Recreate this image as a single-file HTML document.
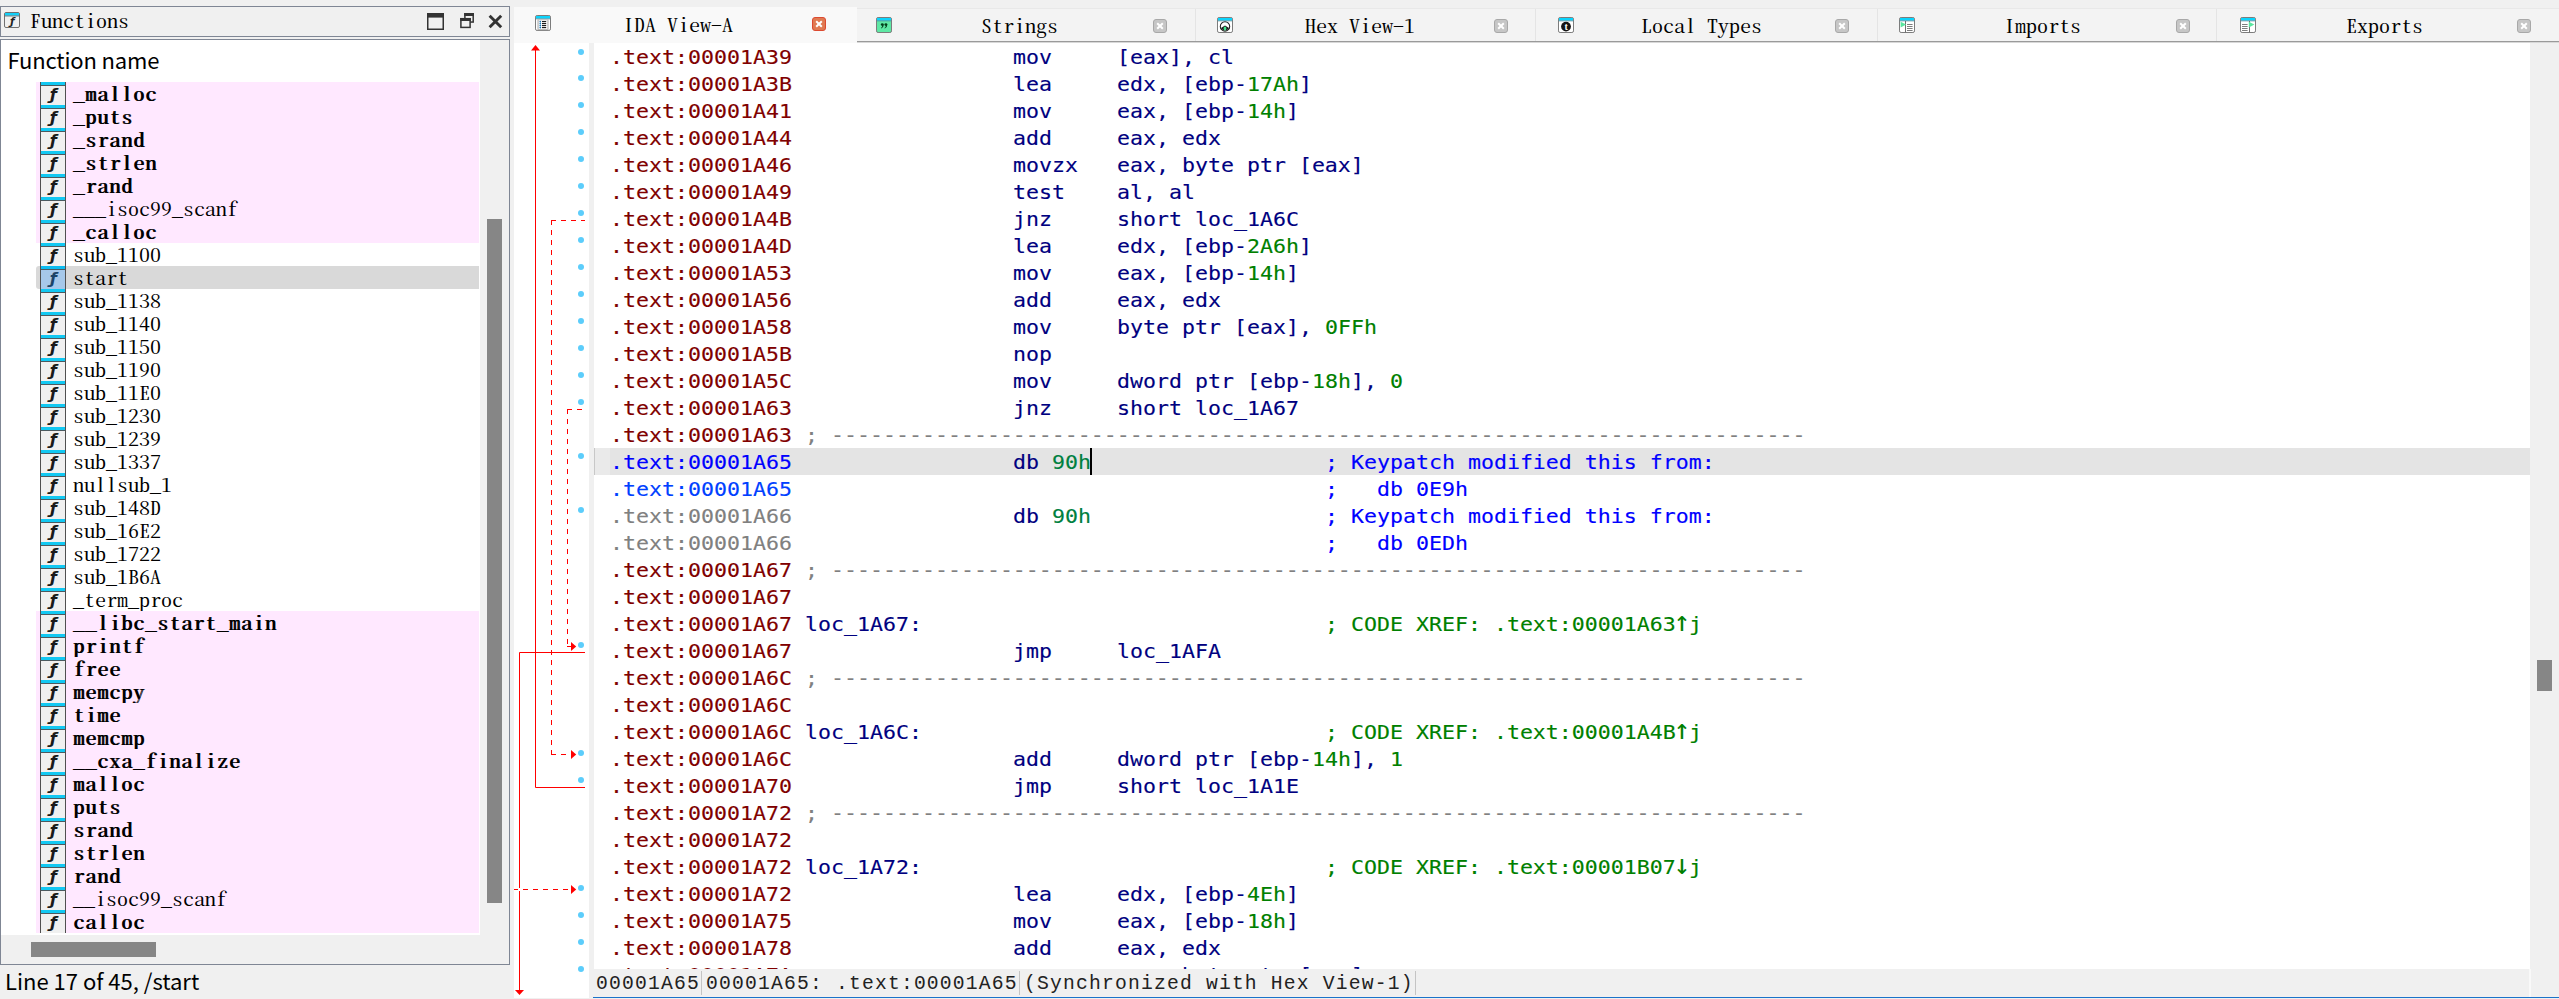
<!DOCTYPE html>
<html lang="en"><head><meta charset="utf-8"><title>IDA</title>
<style>
html,body{margin:0;padding:0}
body{width:2559px;height:999px;overflow:hidden;background:#f0f0f0;position:relative;font-family:"Liberation Sans","Noto Sans CJK SC",sans-serif}
.abs{position:absolute}
.box{position:absolute;box-sizing:border-box;border:1px solid #7f8694}
.ui{font-family:"Noto Sans CJK SC","Liberation Sans",sans-serif;font-size:22px;color:#000;white-space:pre;line-height:30px}
.sim{font-family:"Noto Serif CJK SC","Liberation Mono",monospace;font-feature-settings:"hwid";white-space:pre;color:#000;transform:scaleX(1.2022);transform-origin:0 0}
.fn{position:absolute;left:36px;width:443px;height:23px}
.fn.p{background:#ffe8ff}
.fn.s{background:#d9d9d9;border-radius:3px 0 0 3px}
.fn.s .ic i{color:#1c4468}
.fn.s .ic:before{background:#0cbcf0}
.fn .ic{position:absolute;left:4px;top:0;width:26px;height:23px;box-sizing:border-box;border-left:1px solid #505050;border-right:1px solid #505050;background:#f0f0f0}
.fn .ic:before{content:"";position:absolute;left:0;right:0;top:0;height:3px;background:#12c8f2}
.fn .ic:after{content:"";position:absolute;left:0;right:0;top:3px;height:1px;background:#4c5a60}
.fn.s .ic{background:#a6c8ea}
.fn .ic i{position:absolute;left:0.4px;width:24px;top:2.63px;text-align:center;font:italic bold 16.4px/20px "DejaVu Sans",sans-serif;color:#1a1a1a}
.fn .t{position:absolute;left:37px;top:-0.21px;font:18.3px/23px "Noto Serif CJK SC","Liberation Mono",monospace;font-feature-settings:"hwid";white-space:pre;color:#000;transform:scaleX(1.2022);transform-origin:0 0}
.fn .t.b{letter-spacing:0.83px;text-shadow:0.83px 0 0 #000}
.ln{position:absolute;left:0;height:27px;width:1936px}
.ln span{position:absolute;top:0.51px;font:20.2px/27px 'DejaVu Sans Mono','Liberation Mono',monospace;white-space:pre;transform:scaleX(1.06895);transform-origin:0 0;-webkit-text-stroke:0.14px currentColor}
.ln span.ar{font-size:28px;top:-1.89px;margin-left:-1.95px;transform:none;-webkit-text-stroke:0}
.a{color:#800000}.b1{color:#0000ff}.b2{color:#0040ff}.gr{color:#808080}
.n{color:#000080}.g{color:#008000}.t{color:#008040}.d{color:#808080}.b{color:#0000ff}
.dot{position:absolute;left:578px;width:6px;height:6px;border-radius:50%;background:#5ccdfb}
.sb span{position:absolute;top:1.75px;font:19.7px/27px "Liberation Mono",monospace;letter-spacing:1.178px;white-space:pre;color:#222}
.sb i{position:absolute;top:2px;width:1px;height:24px;background:#c4c4c4}
</style></head><body>
<div class="box" style="left:0;top:6px;width:510px;height:31px;background:#f0f0f0"></div>
<svg class="abs" style="left:4px;top:12px" width="16" height="16" viewBox="0 0 16 16"><rect x="0.5" y="0.5" width="15" height="15" rx="1.5" fill="#f0f0f0" stroke="#707070"/><rect x="1" y="1" width="14" height="2.6" fill="#12d0f8"/><rect x="0.5" y="3.5" width="15" height="0.9" fill="#4c6a74"/><text x="8.4" y="12.8" text-anchor="middle" font-family="DejaVu Sans,sans-serif" font-style="italic" font-weight="bold" font-size="10.5" fill="#222">ƒ</text></svg>
<div class="abs sim" style="left:29.5px;top:9.09px;font-size:18.3px;line-height:22px">Functions</div>
<svg class="abs" style="left:424px;top:10px" width="84" height="24" viewBox="0 0 84 24"><rect x="3.75" y="3.75" width="15.5" height="15.5" fill="none" stroke="#333" stroke-width="1.5"/><rect x="3" y="3" width="17" height="4.6" fill="#333"/><rect x="40.9" y="3.75" width="8.3" height="8.3" fill="none" stroke="#333" stroke-width="1.5"/><rect x="40.2" y="3" width="9.8" height="3" fill="#333"/><rect x="36.9" y="8.7" width="9.2" height="8.7" fill="#f0f0f0" stroke="#333" stroke-width="1.5"/><rect x="36.2" y="8" width="10.6" height="3" fill="#333"/><path d="M65.6 5.7 L77.2 17.3 M77.2 5.7 L65.6 17.3" stroke="#333" stroke-width="2.9" fill="none"/></svg>
<div class="box" style="left:0;top:39px;width:510px;height:926px;background:#fff"></div>
<div class="abs ui" style="left:7.4px;top:44.31px;letter-spacing:-0.15px">Function name</div>
<div class="fn p" style="top:82px"><span class="ic"><i>ƒ</i></span><span class="t b">_malloc</span></div>
<div class="fn p" style="top:105px"><span class="ic"><i>ƒ</i></span><span class="t b">_puts</span></div>
<div class="fn p" style="top:128px"><span class="ic"><i>ƒ</i></span><span class="t b">_srand</span></div>
<div class="fn p" style="top:151px"><span class="ic"><i>ƒ</i></span><span class="t b">_strlen</span></div>
<div class="fn p" style="top:174px"><span class="ic"><i>ƒ</i></span><span class="t b">_rand</span></div>
<div class="fn p" style="top:197px"><span class="ic"><i>ƒ</i></span><span class="t">___isoc99_scanf</span></div>
<div class="fn p" style="top:220px"><span class="ic"><i>ƒ</i></span><span class="t b">_calloc</span></div>
<div class="fn" style="top:243px"><span class="ic"><i>ƒ</i></span><span class="t">sub_1100</span></div>
<div class="fn s" style="top:266px"><span class="ic"><i>ƒ</i></span><span class="t">start</span></div>
<div class="fn" style="top:289px"><span class="ic"><i>ƒ</i></span><span class="t">sub_1138</span></div>
<div class="fn" style="top:312px"><span class="ic"><i>ƒ</i></span><span class="t">sub_1140</span></div>
<div class="fn" style="top:335px"><span class="ic"><i>ƒ</i></span><span class="t">sub_1150</span></div>
<div class="fn" style="top:358px"><span class="ic"><i>ƒ</i></span><span class="t">sub_1190</span></div>
<div class="fn" style="top:381px"><span class="ic"><i>ƒ</i></span><span class="t">sub_11E0</span></div>
<div class="fn" style="top:404px"><span class="ic"><i>ƒ</i></span><span class="t">sub_1230</span></div>
<div class="fn" style="top:427px"><span class="ic"><i>ƒ</i></span><span class="t">sub_1239</span></div>
<div class="fn" style="top:450px"><span class="ic"><i>ƒ</i></span><span class="t">sub_1337</span></div>
<div class="fn" style="top:473px"><span class="ic"><i>ƒ</i></span><span class="t">nullsub_1</span></div>
<div class="fn" style="top:496px"><span class="ic"><i>ƒ</i></span><span class="t">sub_148D</span></div>
<div class="fn" style="top:519px"><span class="ic"><i>ƒ</i></span><span class="t">sub_16E2</span></div>
<div class="fn" style="top:542px"><span class="ic"><i>ƒ</i></span><span class="t">sub_1722</span></div>
<div class="fn" style="top:565px"><span class="ic"><i>ƒ</i></span><span class="t">sub_1B6A</span></div>
<div class="fn" style="top:588px"><span class="ic"><i>ƒ</i></span><span class="t">_term_proc</span></div>
<div class="fn p" style="top:611px"><span class="ic"><i>ƒ</i></span><span class="t b">__libc_start_main</span></div>
<div class="fn p" style="top:634px"><span class="ic"><i>ƒ</i></span><span class="t b">printf</span></div>
<div class="fn p" style="top:657px"><span class="ic"><i>ƒ</i></span><span class="t b">free</span></div>
<div class="fn p" style="top:680px"><span class="ic"><i>ƒ</i></span><span class="t b">memcpy</span></div>
<div class="fn p" style="top:703px"><span class="ic"><i>ƒ</i></span><span class="t b">time</span></div>
<div class="fn p" style="top:726px"><span class="ic"><i>ƒ</i></span><span class="t b">memcmp</span></div>
<div class="fn p" style="top:749px"><span class="ic"><i>ƒ</i></span><span class="t b">__cxa_finalize</span></div>
<div class="fn p" style="top:772px"><span class="ic"><i>ƒ</i></span><span class="t b">malloc</span></div>
<div class="fn p" style="top:795px"><span class="ic"><i>ƒ</i></span><span class="t b">puts</span></div>
<div class="fn p" style="top:818px"><span class="ic"><i>ƒ</i></span><span class="t b">srand</span></div>
<div class="fn p" style="top:841px"><span class="ic"><i>ƒ</i></span><span class="t b">strlen</span></div>
<div class="fn p" style="top:864px"><span class="ic"><i>ƒ</i></span><span class="t b">rand</span></div>
<div class="fn p" style="top:887px"><span class="ic"><i>ƒ</i></span><span class="t">__isoc99_scanf</span></div>
<div class="fn p" style="top:910px"><span class="ic"><i>ƒ</i></span><span class="t b">calloc</span></div>
<div class="abs" style="left:480px;top:40px;width:29px;height:895px;background:#f0f0f0"></div>
<div class="abs" style="left:487px;top:219px;width:15px;height:684px;background:#868686"></div>
<div class="abs" style="left:1px;top:935px;width:508px;height:29px;background:#f0f0f0"></div>
<div class="abs" style="left:31px;top:942px;width:125px;height:15px;background:#868686"></div>
<div class="abs ui" style="left:5px;top:965.11px">Line 17 of 45, /start</div>
<div class="abs" style="left:514px;top:8px;width:2045px;height:1px;background:#e8e8e8"></div>
<div class="abs" style="left:514px;top:9px;width:2045px;height:32px;background:#f3f3f3"></div>
<div class="abs" style="left:514px;top:41px;width:2045px;height:1px;background:#9a9a9a"></div>
<div class="abs" style="left:514px;top:42px;width:2045px;height:1px;background:#d8d8d8"></div>
<div class="abs" style="left:514px;top:7px;width:342.5px;height:35.5px;background:#f9f9f9"></div>
<div class="abs sim" style="left:623px;top:13.09px;font-size:18.3px;line-height:22px">IDA View-A</div>
<div class="abs" style="left:1195.0px;top:9px;width:1px;height:32px;background:#e4e4e4"></div>
<div class="abs sim" style="left:981px;top:14.09px;font-size:18.3px;line-height:22px">Strings</div>
<div class="abs" style="left:1535.25px;top:9px;width:1px;height:32px;background:#e4e4e4"></div>
<div class="abs sim" style="left:1305px;top:14.09px;font-size:18.3px;line-height:22px">Hex View-1</div>
<div class="abs" style="left:1876.9px;top:9px;width:1px;height:32px;background:#e4e4e4"></div>
<div class="abs sim" style="left:1641px;top:14.09px;font-size:18.3px;line-height:22px">Local Types</div>
<div class="abs" style="left:2216.3px;top:9px;width:1px;height:32px;background:#e4e4e4"></div>
<div class="abs sim" style="left:2004px;top:14.09px;font-size:18.3px;line-height:22px">Imports</div>
<div class="abs" style="left:2560px;top:9px;width:1px;height:32px;background:#e4e4e4"></div>
<div class="abs sim" style="left:2346px;top:14.09px;font-size:18.3px;line-height:22px">Exports</div>
<svg class="abs" style="left:811.8px;top:17px" width="14" height="14" viewBox="0 0 14 14"><rect x="0.5" y="0.5" width="13" height="13" rx="2.5" fill="#e07a52" stroke="#dc4a30"/><path d="M4.2 4.2 L9.8 9.8 M9.8 4.2 L4.2 9.8" stroke="#fff" stroke-width="2" fill="none"/></svg>
<svg class="abs" style="left:1153.3px;top:19.3px" width="14" height="14" viewBox="0 0 14 14"><rect x="0.5" y="0.5" width="13" height="13" rx="2.5" fill="#c6c6c6" stroke="#a8a8a8"/><path d="M4.2 4.2 L9.8 9.8 M9.8 4.2 L4.2 9.8" stroke="#fff" stroke-width="2" fill="none"/></svg>
<svg class="abs" style="left:1494px;top:19.3px" width="14" height="14" viewBox="0 0 14 14"><rect x="0.5" y="0.5" width="13" height="13" rx="2.5" fill="#c6c6c6" stroke="#a8a8a8"/><path d="M4.2 4.2 L9.8 9.8 M9.8 4.2 L4.2 9.8" stroke="#fff" stroke-width="2" fill="none"/></svg>
<svg class="abs" style="left:1835px;top:19.3px" width="14" height="14" viewBox="0 0 14 14"><rect x="0.5" y="0.5" width="13" height="13" rx="2.5" fill="#c6c6c6" stroke="#a8a8a8"/><path d="M4.2 4.2 L9.8 9.8 M9.8 4.2 L4.2 9.8" stroke="#fff" stroke-width="2" fill="none"/></svg>
<svg class="abs" style="left:2176px;top:19.3px" width="14" height="14" viewBox="0 0 14 14"><rect x="0.5" y="0.5" width="13" height="13" rx="2.5" fill="#c6c6c6" stroke="#a8a8a8"/><path d="M4.2 4.2 L9.8 9.8 M9.8 4.2 L4.2 9.8" stroke="#fff" stroke-width="2" fill="none"/></svg>
<svg class="abs" style="left:2517.3px;top:19.3px" width="14" height="14" viewBox="0 0 14 14"><rect x="0.5" y="0.5" width="13" height="13" rx="2.5" fill="#c6c6c6" stroke="#a8a8a8"/><path d="M4.2 4.2 L9.8 9.8 M9.8 4.2 L4.2 9.8" stroke="#fff" stroke-width="2" fill="none"/></svg>
<svg class="abs" style="left:535px;top:15px" width="16" height="16" viewBox="0 0 16 16"><rect x="0.5" y="0.5" width="15" height="15" rx="1.6" fill="#fff" stroke="#7c7c7c"/><rect x="1" y="1" width="14" height="2.7" fill="#0cd4fc"/><rect x="0.5" y="3.5" width="15" height="0.8" fill="#5a8a98"/><rect x="2.4" y="4.3" width="11.2" height="10.9" fill="#b9b9b9"/><rect x="3.7" y="5.3" width="8.6" height="8.7" fill="#fff"/><circle cx="5.3" cy="6.6" r="0.9" fill="#1878b8"/><rect x="7" y="6.05" width="4.2" height="1.1" fill="#111"/><circle cx="5.3" cy="8.6" r="0.9" fill="#1878b8"/><rect x="7" y="8.05" width="4.2" height="1.1" fill="#111"/><circle cx="5.3" cy="10.6" r="0.9" fill="#1878b8"/><rect x="7" y="10.05" width="4.2" height="1.1" fill="#111"/><circle cx="5.3" cy="12.6" r="0.9" fill="#1878b8"/><rect x="7" y="12.05" width="4.2" height="1.1" fill="#111"/></svg>
<svg class="abs" style="left:876px;top:17px" width="16" height="16" viewBox="0 0 16 16"><rect x="0.5" y="0.5" width="15" height="15" rx="1.6" fill="#5ee8a4" stroke="#7c7c7c"/><rect x="1" y="1" width="14" height="2.7" fill="#0cd4fc"/><rect x="0.5" y="3.5" width="15" height="0.8" fill="#5a8a98"/><g fill="#04401c"><circle cx="6.3" cy="7.6" r="1.45"/><path d="M7.7 7.4 Q7.8 10.4 5.2 11.6 L4.9 10.9 Q6.4 10 6.2 8.4 Z"/><circle cx="9.9" cy="7.6" r="1.45"/><path d="M11.3 7.4 Q11.4 10.4 8.8 11.6 L8.5 10.9 Q10 10 9.8 8.4 Z"/></g></svg>
<svg class="abs" style="left:1217px;top:17px" width="16" height="16" viewBox="0 0 16 16"><rect x="0.5" y="0.5" width="15" height="15" rx="1.6" fill="#fff" stroke="#7c7c7c"/><rect x="1" y="1" width="14" height="2.7" fill="#0cd4fc"/><rect x="0.5" y="3.5" width="15" height="0.8" fill="#5a8a98"/><circle cx="8" cy="9.4" r="4.7" fill="#fff" stroke="#222" stroke-width="1.1"/><path d="M4 11 A4.7 4.7 0 0 0 12 11 L8 8.6 Z" fill="#1a1a1a"/><ellipse cx="8" cy="11.6" rx="1.4" ry="2" fill="#3fe58c"/></svg>
<svg class="abs" style="left:1558px;top:17px" width="16" height="16" viewBox="0 0 16 16"><rect x="0.5" y="0.5" width="15" height="15" rx="1.6" fill="#fff" stroke="#7c7c7c"/><rect x="1" y="1" width="14" height="2.7" fill="#0cd4fc"/><rect x="0.5" y="3.5" width="15" height="0.8" fill="#5a8a98"/><circle cx="8" cy="9.6" r="4.9" fill="#151515"/><text x="8.2" y="13" text-anchor="middle" font-family="Liberation Serif,serif" font-weight="bold" font-size="10" fill="#fff">t</text></svg>
<svg class="abs" style="left:1899px;top:17px" width="16" height="16" viewBox="0 0 16 16"><rect x="0.5" y="0.5" width="15" height="15" rx="1.6" fill="#fff" stroke="#7c7c7c"/><rect x="1" y="1" width="14" height="2.7" fill="#0cd4fc"/><rect x="0.5" y="3.5" width="15" height="0.8" fill="#5a8a98"/><rect x="6" y="4" width="1" height="11.5" fill="#707070"/><rect x="8" y="7.0" width="5.6" height="0.9" fill="#707070"/><rect x="8" y="9.0" width="5.6" height="0.9" fill="#707070"/><rect x="8" y="11.0" width="5.6" height="0.9" fill="#707070"/><rect x="8" y="13.0" width="5.6" height="0.9" fill="#707070"/><path d="M1.6 4.8 L7.2 7.6 L1.6 10.6 Z" fill="#5ae6a0"/></svg>
<svg class="abs" style="left:2240px;top:17px" width="16" height="16" viewBox="0 0 16 16"><rect x="0.5" y="0.5" width="15" height="15" rx="1.6" fill="#fff" stroke="#7c7c7c"/><rect x="1" y="1" width="14" height="2.7" fill="#0cd4fc"/><rect x="0.5" y="3.5" width="15" height="0.8" fill="#5a8a98"/><rect x="2" y="7.0" width="5.6" height="0.9" fill="#707070"/><rect x="2" y="9.0" width="5.6" height="0.9" fill="#707070"/><rect x="2" y="11.0" width="5.6" height="0.9" fill="#707070"/><rect x="2" y="13.0" width="5.6" height="0.9" fill="#707070"/><rect x="9" y="4" width="1" height="11.5" fill="#707070"/><path d="M8.8 4.8 L14.4 7.6 L8.8 10.6 Z" fill="#5ae6a0"/></svg>
<div class="abs" style="left:514px;top:42.5px;width:75px;height:955px;background:#fff"></div>
<div class="abs" style="left:594px;top:43px;width:1936px;height:926px;background:#fff;overflow:hidden">
<div class="abs" style="left:0;top:405px;width:1936px;height:27px;background:#e4e4e4"></div>
<div class="abs" style="left:0;top:405px;width:16px;height:27px;background:#eaeaea;border-left:1px solid #c8c8c8;box-sizing:border-box"></div>
<div class="ln" style="top:0px"><span class="a" style="left:15.600000000000023px">.text:00001A39</span><span class="n" style="left:418.6px">mov</span><span class="n" style="left:522.6px">[eax], cl</span></div>
<div class="ln" style="top:27px"><span class="a" style="left:15.600000000000023px">.text:00001A3B</span><span class="n" style="left:418.6px">lea</span><span class="n" style="left:522.6px">edx, [ebp-</span><span class="g" style="left:652.6px">17Ah</span><span class="n" style="left:704.6px">]</span></div>
<div class="ln" style="top:54px"><span class="a" style="left:15.600000000000023px">.text:00001A41</span><span class="n" style="left:418.6px">mov</span><span class="n" style="left:522.6px">eax, [ebp-</span><span class="g" style="left:652.6px">14h</span><span class="n" style="left:691.6px">]</span></div>
<div class="ln" style="top:81px"><span class="a" style="left:15.600000000000023px">.text:00001A44</span><span class="n" style="left:418.6px">add</span><span class="n" style="left:522.6px">eax, edx</span></div>
<div class="ln" style="top:108px"><span class="a" style="left:15.600000000000023px">.text:00001A46</span><span class="n" style="left:418.6px">movzx</span><span class="n" style="left:522.6px">eax, byte ptr [eax]</span></div>
<div class="ln" style="top:135px"><span class="a" style="left:15.600000000000023px">.text:00001A49</span><span class="n" style="left:418.6px">test</span><span class="n" style="left:522.6px">al, al</span></div>
<div class="ln" style="top:162px"><span class="a" style="left:15.600000000000023px">.text:00001A4B</span><span class="n" style="left:418.6px">jnz</span><span class="n" style="left:522.6px">short loc_1A6C</span></div>
<div class="ln" style="top:189px"><span class="a" style="left:15.600000000000023px">.text:00001A4D</span><span class="n" style="left:418.6px">lea</span><span class="n" style="left:522.6px">edx, [ebp-</span><span class="g" style="left:652.6px">2A6h</span><span class="n" style="left:704.6px">]</span></div>
<div class="ln" style="top:216px"><span class="a" style="left:15.600000000000023px">.text:00001A53</span><span class="n" style="left:418.6px">mov</span><span class="n" style="left:522.6px">eax, [ebp-</span><span class="g" style="left:652.6px">14h</span><span class="n" style="left:691.6px">]</span></div>
<div class="ln" style="top:243px"><span class="a" style="left:15.600000000000023px">.text:00001A56</span><span class="n" style="left:418.6px">add</span><span class="n" style="left:522.6px">eax, edx</span></div>
<div class="ln" style="top:270px"><span class="a" style="left:15.600000000000023px">.text:00001A58</span><span class="n" style="left:418.6px">mov</span><span class="n" style="left:522.6px">byte ptr [eax], </span><span class="g" style="left:730.6px">0FFh</span></div>
<div class="ln" style="top:297px"><span class="a" style="left:15.600000000000023px">.text:00001A5B</span><span class="n" style="left:418.6px">nop</span></div>
<div class="ln" style="top:324px"><span class="a" style="left:15.600000000000023px">.text:00001A5C</span><span class="n" style="left:418.6px">mov</span><span class="n" style="left:522.6px">dword ptr [ebp-</span><span class="g" style="left:717.6px">18h</span><span class="n" style="left:756.6px">], </span><span class="g" style="left:795.6px">0</span></div>
<div class="ln" style="top:351px"><span class="a" style="left:15.600000000000023px">.text:00001A63</span><span class="n" style="left:418.6px">jnz</span><span class="n" style="left:522.6px">short loc_1A67</span></div>
<div class="ln" style="top:378px"><span class="a" style="left:15.600000000000023px">.text:00001A63</span><span class="d" style="left:210.60000000000002px">; ---------------------------------------------------------------------------</span></div>
<div class="ln" style="top:405px"><span class="b1" style="left:15.600000000000023px">.text:00001A65</span><span class="n" style="left:418.6px">db </span><span class="t" style="left:457.6px">90h</span><span class="b" style="left:730.6px">; Keypatch modified this from:</span></div>
<div class="ln" style="top:432px"><span class="b2" style="left:15.600000000000023px">.text:00001A65</span><span class="b" style="left:730.6px">;   db 0E9h</span></div>
<div class="ln" style="top:459px"><span class="gr" style="left:15.600000000000023px">.text:00001A66</span><span class="n" style="left:418.6px">db </span><span class="t" style="left:457.6px">90h</span><span class="b" style="left:730.6px">; Keypatch modified this from:</span></div>
<div class="ln" style="top:486px"><span class="gr" style="left:15.600000000000023px">.text:00001A66</span><span class="b" style="left:730.6px">;   db 0EDh</span></div>
<div class="ln" style="top:513px"><span class="a" style="left:15.600000000000023px">.text:00001A67</span><span class="d" style="left:210.60000000000002px">; ---------------------------------------------------------------------------</span></div>
<div class="ln" style="top:540px"><span class="a" style="left:15.600000000000023px">.text:00001A67</span></div>
<div class="ln" style="top:567px"><span class="a" style="left:15.600000000000023px">.text:00001A67</span><span class="n" style="left:210.60000000000002px">loc_1A67:</span><span class="g" style="left:730.6px">; CODE XREF: .text:00001A63</span><span class="g ar" style="left:1081.6px">↑</span><span class="g" style="left:1094.6px">j</span></div>
<div class="ln" style="top:594px"><span class="a" style="left:15.600000000000023px">.text:00001A67</span><span class="n" style="left:418.6px">jmp</span><span class="n" style="left:522.6px">loc_1AFA</span></div>
<div class="ln" style="top:621px"><span class="a" style="left:15.600000000000023px">.text:00001A6C</span><span class="d" style="left:210.60000000000002px">; ---------------------------------------------------------------------------</span></div>
<div class="ln" style="top:648px"><span class="a" style="left:15.600000000000023px">.text:00001A6C</span></div>
<div class="ln" style="top:675px"><span class="a" style="left:15.600000000000023px">.text:00001A6C</span><span class="n" style="left:210.60000000000002px">loc_1A6C:</span><span class="g" style="left:730.6px">; CODE XREF: .text:00001A4B</span><span class="g ar" style="left:1081.6px">↑</span><span class="g" style="left:1094.6px">j</span></div>
<div class="ln" style="top:702px"><span class="a" style="left:15.600000000000023px">.text:00001A6C</span><span class="n" style="left:418.6px">add</span><span class="n" style="left:522.6px">dword ptr [ebp-</span><span class="g" style="left:717.6px">14h</span><span class="n" style="left:756.6px">], </span><span class="g" style="left:795.6px">1</span></div>
<div class="ln" style="top:729px"><span class="a" style="left:15.600000000000023px">.text:00001A70</span><span class="n" style="left:418.6px">jmp</span><span class="n" style="left:522.6px">short loc_1A1E</span></div>
<div class="ln" style="top:756px"><span class="a" style="left:15.600000000000023px">.text:00001A72</span><span class="d" style="left:210.60000000000002px">; ---------------------------------------------------------------------------</span></div>
<div class="ln" style="top:783px"><span class="a" style="left:15.600000000000023px">.text:00001A72</span></div>
<div class="ln" style="top:810px"><span class="a" style="left:15.600000000000023px">.text:00001A72</span><span class="n" style="left:210.60000000000002px">loc_1A72:</span><span class="g" style="left:730.6px">; CODE XREF: .text:00001B07</span><span class="g ar" style="left:1081.6px">↓</span><span class="g" style="left:1094.6px">j</span></div>
<div class="ln" style="top:837px"><span class="a" style="left:15.600000000000023px">.text:00001A72</span><span class="n" style="left:418.6px">lea</span><span class="n" style="left:522.6px">edx, [ebp-</span><span class="g" style="left:652.6px">4Eh</span><span class="n" style="left:691.6px">]</span></div>
<div class="ln" style="top:864px"><span class="a" style="left:15.600000000000023px">.text:00001A75</span><span class="n" style="left:418.6px">mov</span><span class="n" style="left:522.6px">eax, [ebp-</span><span class="g" style="left:652.6px">18h</span><span class="n" style="left:691.6px">]</span></div>
<div class="ln" style="top:891px"><span class="a" style="left:15.600000000000023px">.text:00001A78</span><span class="n" style="left:418.6px">add</span><span class="n" style="left:522.6px">eax, edx</span></div>
<div class="ln" style="top:918px"><span class="a" style="left:15.600000000000023px">.text:00001A7A</span><span class="n" style="left:418.6px">movzx</span><span class="n" style="left:522.6px">eax, byte ptr [eax]</span></div>
<div class="abs" style="left:496px;top:405px;width:2px;height:27px;background:#000"></div>
</div>
<div class="abs" style="left:2537px;top:660px;width:15px;height:31px;background:#868686"></div>
<div class="dot" style="top:49px"></div>
<div class="dot" style="top:75px"></div>
<div class="dot" style="top:102px"></div>
<div class="dot" style="top:129px"></div>
<div class="dot" style="top:156px"></div>
<div class="dot" style="top:183px"></div>
<div class="dot" style="top:210px"></div>
<div class="dot" style="top:237px"></div>
<div class="dot" style="top:264px"></div>
<div class="dot" style="top:291px"></div>
<div class="dot" style="top:318px"></div>
<div class="dot" style="top:345px"></div>
<div class="dot" style="top:372px"></div>
<div class="dot" style="top:399px"></div>
<div class="dot" style="top:453px"></div>
<div class="dot" style="top:507px"></div>
<div class="dot" style="top:642px"></div>
<div class="dot" style="top:750px"></div>
<div class="dot" style="top:777px"></div>
<div class="dot" style="top:885px"></div>
<div class="dot" style="top:912px"></div>
<div class="dot" style="top:939px"></div>
<div class="dot" style="top:966px"></div>
<svg class="abs" style="left:514px;top:42px" width="75" height="957" viewBox="514 42 75 957" fill="none" stroke="#ff0000" stroke-width="1">
<path d="M585 787.5 H535.5 V49"/><path d="M531 50.5 L535.5 45 L540 50.5 Z" fill="#ff0000" stroke="none"/><path d="M585 652.5 H519.5 V991"/><path d="M515 990 L524 990 L519.5 995 Z" fill="#ff0000" stroke="none"/><g stroke-dasharray="5 5"><path d="M551 220.5 H585"/><path d="M551.5 220.0 V755.0"/><path d="M551 754.5 H571"/><path d="M567 409.5 H582"/><path d="M567.5 409.0 V647.0"/><path d="M567 646.5 H571"/><rect x="518" y="888.0" width="3" height="3" fill="#fff" stroke="none"/><path d="M513 889.5 H571"/></g><path d="M571 750 L571 759 L576.2 754.5 Z" fill="#ff0000" stroke="none"/><path d="M571 642 L571 651 L576.2 646.5 Z" fill="#ff0000" stroke="none"/><path d="M571 885 L571 894 L576.2 889.5 Z" fill="#ff0000" stroke="none"/></svg>
<div class="abs sb" style="left:594px;top:969px;width:1965px;height:27.5px;background:#f0f0f0"><span style="left:2px">00001A65</span><i style="left:107px"></i><span style="left:112px">00001A65: .text:00001A65</span><i style="left:425px"></i><span style="left:430px">(Synchronized with Hex View-1)</span><i style="left:821px"></i></div>
<div class="abs" style="left:2529px;top:969px;width:1.5px;height:27.5px;background:#f9f9f9"></div>
<div class="abs" style="left:593px;top:996.5px;width:1966px;height:1.5px;background:#1b72c9"></div>
</body></html>
